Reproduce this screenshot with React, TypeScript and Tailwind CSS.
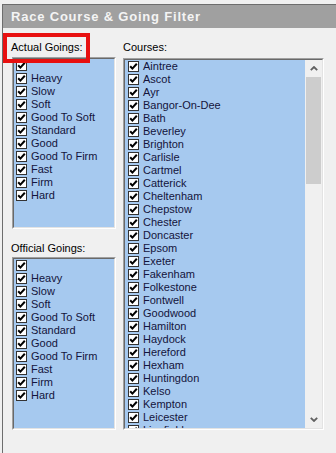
import React from 'react';

const goings = ['', 'Heavy', 'Slow', 'Soft', 'Good To Soft', 'Standard', 'Good', 'Good To Firm', 'Fast', 'Firm', 'Hard'];

const courses = [
    'Aintree', 'Ascot', 'Ayr', 'Bangor-On-Dee', 'Bath', 'Beverley', 'Brighton', 'Carlisle', 'Cartmel',
    'Catterick', 'Cheltenham', 'Chepstow', 'Chester', 'Doncaster', 'Epsom', 'Exeter', 'Fakenham',
    'Folkestone', 'Fontwell', 'Goodwood', 'Hamilton', 'Haydock', 'Hereford', 'Hexham', 'Huntingdon',
    'Kelso', 'Kempton', 'Leicester', 'Lingfield',
];

const CheckBox: React.FC = () => (
    <div className="w-[11px] h-[11px] shrink-0 bg-white border border-[#333333] flex items-center justify-center">
        <svg width="9" height="9" viewBox="0 0 9 9">
            <polyline points="1.2,4.2 3.4,6.6 7.8,1.8" fill="none" stroke="#000" strokeWidth="2" />
        </svg>
    </div>
);

const Row: React.FC<{ label: string }> = ({ label }) => (
    <div className="h-[13px] flex items-center pl-[2px] gap-[4px] whitespace-nowrap">
        <CheckBox />
        <span className="text-[11px] leading-[13px] text-[#14143c]">{label}</span>
    </div>
);

// sunken win32 style list frame
const ListFrame: React.FC<{ className?: string; children: React.ReactNode }> = ({ className, children }) => (
    <div className={`border border-t-[#a0a0a0] border-l-[#a0a0a0] border-b-white border-r-white ${className ?? ''}`}>
        <div className="h-full border border-t-[#696969] border-l-[#696969] border-b-[#e3e3e3] border-r-[#e3e3e3] bg-[#a6c9ef] overflow-hidden">
            {children}
        </div>
    </div>
);

const Chevron: React.FC<{ up?: boolean }> = ({ up }) => (
    <svg width="8" height="5" viewBox="0 0 8 5">
        <polyline
            points={up ? '0.8,4.2 4,1 7.2,4.2' : '0.8,0.8 4,4 7.2,0.8'}
            fill="none"
            stroke="#606060"
            strokeWidth="1.8"
        />
    </svg>
);

const App: React.FC = () => {
    return (
        <div
            className="w-[336px] h-[453px] bg-[#f0f0f0] pt-[4px] pl-[2px] overflow-hidden relative"
            style={{ fontFamily: '"Liberation Sans", Arial, sans-serif' }}
        >
            <div className="h-full border-t border-l border-[#6d6d6d] flex flex-col">
                {/* Title */}
                <div className="h-[23px] bg-[#a0a0a0] pl-[8px] flex items-center">
                    <span className="text-[13px] font-bold tracking-[0.8px] text-[#f4f4f4] leading-none">
                        Race Course &amp; Going Filter
                    </span>
                </div>

                {/* Body */}
                <div className="flex pl-[9px] pt-[13px]">
                    <div className="w-[104px] flex flex-col">
                        <div className="text-[11px] leading-[13px] text-black -ml-[1px]">Actual Goings:</div>
                        <ListFrame className="mt-[3px] h-[172px]">
                            {goings.map((g, i) => (
                                <Row key={i} label={g} />
                            ))}
                        </ListFrame>
                        <div className="mt-[13px] text-[11px] leading-[13px] text-black -ml-[1px]">Official Goings:</div>
                        <ListFrame className="mt-[2px] h-[173px]">
                            {goings.map((g, i) => (
                                <Row key={i} label={g} />
                            ))}
                        </ListFrame>
                    </div>

                    <div className="ml-[7px] w-[201px] flex flex-col">
                        <div className="text-[11px] leading-[13px] text-black">Courses:</div>
                        <ListFrame className="mt-[4px] h-[372px]">
                            <div className="flex h-full">
                                <div className="flex-1 overflow-hidden pl-[1px]">
                                    {courses.map(c => (
                                        <Row key={c} label={c} />
                                    ))}
                                </div>
                                <div className="w-[17px] bg-[#f0f0f0] flex flex-col">
                                    <div className="h-[17px] flex items-center justify-center">
                                        <Chevron up />
                                    </div>
                                    <div className="mx-[1px] h-[107px] bg-[#cdcdcd]" />
                                    <div className="flex-1" />
                                    <div className="h-[17px] flex items-center justify-center">
                                        <Chevron />
                                    </div>
                                </div>
                            </div>
                        </ListFrame>
                    </div>
                </div>
            </div>

            {/* red highlight annotation */}
            <div className="absolute left-[3px] top-[33px] w-[87px] h-[30px] border-[4px] border-[#e81010]" />
        </div>
    );
};

export default App;
